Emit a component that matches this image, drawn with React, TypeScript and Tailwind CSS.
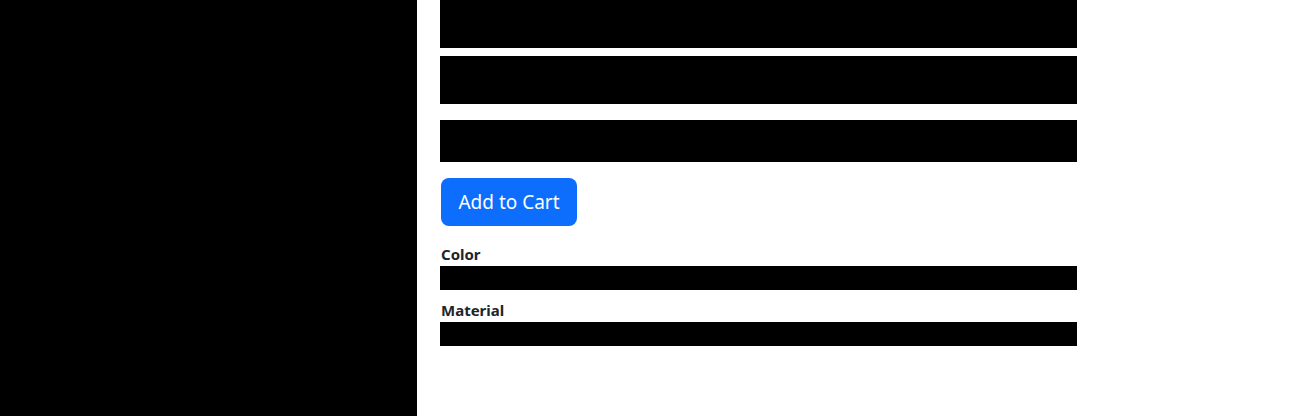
export default function App() {
  return (
    <div className="flex h-[416px] w-[1297px] overflow-hidden bg-white" style={{ fontFamily: '"Noto Sans", "Open Sans", sans-serif' }}>
      <div className="h-full w-[417px] shrink-0 bg-black" />
      <div className="pl-[23px]">
        <div className="h-12 w-[637px] bg-black" />
        <div className="mt-2 h-12 w-[637px] bg-black" />
        <div className="mt-4 h-[42px] w-[637px] bg-black" />
        <button className="ml-px mt-4 flex h-12 w-[136px] items-center justify-center rounded-lg bg-[#0d6efd] text-[19px] text-white">
          Add to Cart
        </button>
        <div className="ml-px mt-4 text-[15px] font-bold leading-6 text-[#212529]">Color</div>
        <div className="h-6 w-[637px] bg-black" />
        <div className="ml-px mt-2 text-[15px] font-bold leading-6 text-[#212529]">Material</div>
        <div className="h-6 w-[637px] bg-black" />
      </div>
    </div>
  );
}
